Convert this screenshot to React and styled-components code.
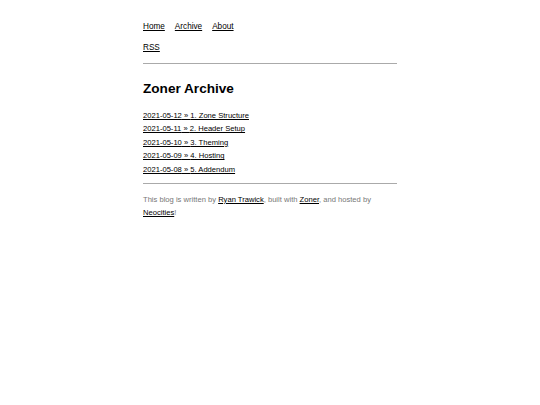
import React from 'react';
import styled, { createGlobalStyle } from 'styled-components';

const Global = createGlobalStyle`
  body {
    margin: 0;
    background: #fff;
    color: #000;
    font-family: "Liberation Sans", Arial, sans-serif;
  }
`;

const Page = styled.div`
  width: 254px;
  margin: 0 auto;
  padding-top: 21px;
`;

const Nav = styled.nav`
  display: flex;
  flex-wrap: wrap;
  gap: 10px;
  font-size: 8.2px;
  line-height: 12px;
`;

const NavLink = styled.a`
  color: #000;
  text-decoration: underline;
`;

const Feed = styled.div`
  margin-top: 9px;
  font-size: 8.2px;
  line-height: 12px;
`;

const Rule = styled.hr`
  border: 0;
  border-top: 1px solid #aaa;
  margin: ${(p) => p.$gap || '9px 0 0'};
`;

const Title = styled.h1`
  font-size: 13.6px;
  font-weight: bold;
  margin: 17px 0 0;
  line-height: 16px;
`;

const List = styled.ul`
  list-style: none;
  margin: 12px 0 0;
  padding: 0;
  font-size: 7.6px;
  line-height: 13.4px;
`;

const Item = styled.li`
  a {
    color: #000;
    text-decoration: underline;
  }
`;

const Footer = styled.footer`
  margin-top: 9px;
  font-size: 7.6px;
  line-height: 13.4px;
  color: #777;

  a {
    color: #000;
    text-decoration: underline;
  }
`;

const posts = [
  ['2021-05-12', '1. Zone Structure'],
  ['2021-05-11', '2. Header Setup'],
  ['2021-05-10', '3. Theming'],
  ['2021-05-09', '4. Hosting'],
  ['2021-05-08', '5. Addendum'],
];

export default function App() {
  return (
    <>
      <Global />
      <Page>
        <Nav>
          <NavLink href="#">Home</NavLink>
          <NavLink href="#">Archive</NavLink>
          <NavLink href="#">About</NavLink>
        </Nav>
        <Feed>
          <NavLink href="#">RSS</NavLink>
        </Feed>
        <Rule />
        <Title>Zoner Archive</Title>
        <List>
          {posts.map(([date, name]) => (
            <Item key={date}>
              <a href="#">{date} » {name}</a>
            </Item>
          ))}
        </List>
        <Rule $gap="7px 0 0" />
        <Footer>
          This blog is written by <a href="#">Ryan Trawick</a>, built with{' '}
          <a href="#">Zoner</a>, and hosted by <a href="#">Neocities</a>!
        </Footer>
      </Page>
    </>
  );
}
